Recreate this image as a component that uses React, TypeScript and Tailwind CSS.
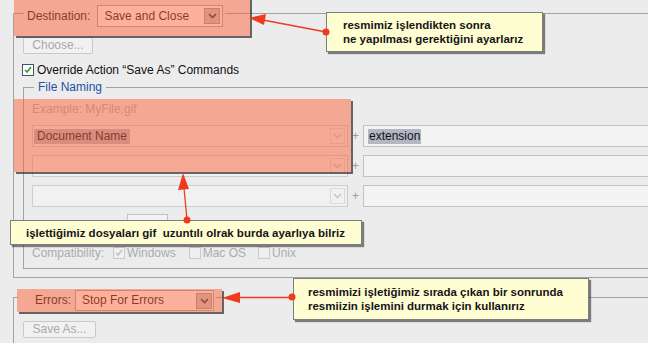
import React from "react";

const Chevron = ({ faded }: { faded?: boolean }) => (
  <svg width="9" height="6" viewBox="0 0 9 6">
    <path d="M1 1l3.5 3.5L8 1" fill="none" stroke={faded ? "#c8c8c8" : "#333"} strokeWidth="1.7" />
  </svg>
);

const Check = ({ disabled }: { disabled?: boolean }) => (
  <div
    className={`flex h-[12px] w-[12px] shrink-0 items-center justify-center border ${
      disabled ? "border-[#c9c9c9] bg-[#f0f0f0]" : "border-[#3d5670] bg-white"
    }`}
  >
    <svg width="8" height="8" viewBox="0 0 8 8">
      <path d="M1 4l2 2 4-5" fill="none" stroke={disabled ? "#c2c2c2" : "#2f9a2f"} strokeWidth="1.6" />
    </svg>
  </div>
);

const Box = ({ disabled }: { disabled?: boolean }) => (
  <div className={`h-[12px] w-[12px] shrink-0 border ${disabled ? "border-[#cbcbcb] bg-[#efefef]" : "border-[#3d5670] bg-white"}`} />
);

function NameRow({ sel, ext }: { sel?: string; ext?: string }) {
  return (
    <div className="flex h-[22px] items-center">
      <div className="flex h-[22px] w-[316px] shrink-0 items-center border border-[#cdcdcd] bg-[#f1f1f1] pl-[1px] pr-[2px]">
        {sel && <span className="bg-[#b3b7c5] px-[3px] leading-[15px] text-[#111]">{sel}</span>}
        <div className="ml-auto flex h-[16px] w-[15px] items-center justify-center border border-[#dadada]">
          <Chevron faded />
        </div>
      </div>
      <span className="w-[15px] shrink-0 text-center text-[#9c9c9c]">+</span>
      <div className="flex h-[22px] w-[320px] shrink-0 items-center border border-[#c3c3c3] bg-[#f3f3f3] pl-[4px]">
        {ext && <span className="bg-[#b3b7c5] px-[1px] leading-[15px] text-[#111]">{ext}</span>}
      </div>
    </div>
  );
}

function DropButton() {
  return (
    <div className="flex h-[16px] w-[16px] items-center justify-center border border-[#9a9a9a] bg-[#c6c6c6]">
      <Chevron />
    </div>
  );
}

export default function App() {
  return (
    <div className="relative h-[343px] w-[648px] overflow-hidden bg-[#ececec] font-['Liberation_Sans',Arial,sans-serif] text-[12px] leading-[15px] text-[#111]">
      {/* Destination group */}
      <div className="ml-[13px] mt-[13px] h-[265px] w-[700px] border-b border-l border-t border-[#a2a2a2]">
        <div className="-mt-[9px] ml-[10px] flex w-max items-center gap-[7px] bg-[#ececec] pl-[3px] pr-[2px]">
          <span>Destination:</span>
          <div className="flex h-[22px] w-[126px] items-center border border-[#a8a8a8] bg-white pl-[6px] pr-[2px]">
            <span>Save and Close</span>
            <div className="ml-auto">
              <DropButton />
            </div>
          </div>
        </div>

        <div className="ml-[9px] mt-[10px] flex h-[17px] w-[70px] items-center justify-center rounded-[2px] border border-[#c9c9c9] bg-[#f1f1f1] text-[#a9a9a9]">
          Choose...
        </div>

        <div className="ml-[8px] mt-[9px] flex h-[14px] items-center gap-[3px]">
          <Check />
          <span>Override Action “Save As” Commands</span>
        </div>

        {/* File Naming group */}
        <div className="ml-[9px] mt-[10px] h-[182px] w-[700px] border-b border-l border-t border-[#a2a2a2]">
          <div className="-mt-[8px] ml-[10px] w-max bg-[#ececec] px-[4px] text-[#1f50a8]">File Naming</div>
          <div className="ml-[8px] mt-[7px] text-[#b0b0b0]">Example: MyFile.gif</div>
          <div className="ml-[8px] mt-[8px] flex flex-col gap-[8px]">
            <NameRow sel="Document Name" ext="extension" />
            <NameRow />
            <NameRow />
          </div>
          {/* serial row, mostly hidden under the note */}
          <div className="ml-[8px] mt-[7px] flex h-[20px] items-center">
            <div className="w-[95px] shrink-0" />
            <div className="h-[20px] w-[41px] border border-[#c3c3c3] bg-[#f3f3f3]" />
          </div>
          <div className="ml-[8px] mt-[12px] flex h-[14px] items-center text-[#ababab]">
            <span className="w-[81px] shrink-0">Compatibility:</span>
            <div className="flex items-center gap-[2px]">
              <Check disabled />
              <span>Windows</span>
            </div>
            <div className="ml-[13px] flex items-center gap-[2px]">
              <Box disabled />
              <span>Mac OS</span>
            </div>
            <div className="ml-[12px] flex items-center gap-[2px]">
              <Box disabled />
              <span>Unix</span>
            </div>
          </div>
        </div>
      </div>

      {/* Errors group */}
      <div className="ml-[13px] mt-[19px] h-[60px] w-[700px] border-l border-t border-[#a2a2a2]">
        <div className="-mt-[8px] ml-[4px] flex w-max items-center gap-[4px] bg-[#ececec] pl-[17px] pr-[2px]">
          <span>Errors:</span>
          <div className="flex h-[21px] w-[139px] items-center border border-[#a8a8a8] bg-white pl-[6px] pr-[1px]">
            <span>Stop For Errors</span>
            <div className="ml-auto">
              <DropButton />
            </div>
          </div>
        </div>
        <div className="ml-[9px] mt-[10px] flex h-[17px] w-[73px] items-center justify-center rounded-[2px] border border-[#c9c9c9] bg-[#f1f1f1] text-[#a9a9a9]">
          Save As...
        </div>
      </div>

      {/* highlight overlays */}
      <div className="absolute left-[14px] top-[-2px] h-[38px] w-[236px] bg-[rgba(252,100,58,0.5)] shadow-[2px_2px_0_rgba(55,55,55,0.75)]" />
      <div className="absolute left-[14px] top-[99px] h-[73px] w-[337px] bg-[rgba(252,100,58,0.5)] shadow-[2px_2px_0_rgba(55,55,55,0.75)]" />
      <div className="absolute left-[17px] top-[289px] h-[23px] w-[205px] bg-[rgba(252,100,58,0.5)] shadow-[2px_2px_0_rgba(55,55,55,0.75)]" />

      {/* callouts */}
      <div className="absolute left-[326px] top-[12px] h-[40px] w-[217px] border border-[#7d7d7d] bg-[#fffed3] pl-[16px] pt-[5px] text-[11.5px] font-bold leading-[14px] text-[#151515] shadow-[2px_2px_1px_rgba(50,50,50,0.6)]">
        <div>resmimiz işlendikten sonra</div>
        <div>ne yapılması gerektiğini ayarlarız</div>
      </div>
      <div className="absolute left-[10px] top-[220px] flex h-[25px] w-[352px] items-center border border-[#7d7d7d] bg-[#fffed3] pl-[15px] text-[11.5px] font-bold leading-[14px] text-[#151515] shadow-[2px_2px_1px_rgba(50,50,50,0.6)]">
        işlettiğimiz dosyaları gif&nbsp; uzuntılı olrak burda ayarlıya bilriz
      </div>
      <div className="absolute left-[293px] top-[278px] h-[42px] w-[296px] border border-[#7d7d7d] bg-[#fffed3] pl-[14px] pt-[6px] text-[11.5px] font-bold leading-[14px] text-[#151515] shadow-[2px_2px_1px_rgba(50,50,50,0.6)]">
        <div>resmimizi işletiğimiz sırada çıkan bir sonrunda</div>
        <div>resmiizin işlemini durmak için kullanırız</div>
      </div>

      {/* arrows */}
      <svg className="pointer-events-none absolute left-0 top-0" width="648" height="343" viewBox="0 0 648 343">
        <g fill="#ee3b1f" stroke="#ee3b1f">
          <line x1="263" y1="20" x2="326" y2="32" strokeWidth="1.3" />
          <polygon points="249,18 266,14 264,25" stroke="none" />
          <circle cx="326" cy="32" r="3.5" stroke="none" />

          <line x1="184" y1="188" x2="187" y2="220" strokeWidth="1.3" />
          <polygon points="183,173 178,190 189,189" stroke="none" />
          <circle cx="187" cy="220" r="3.5" stroke="none" />

          <line x1="238" y1="297.5" x2="292" y2="297.5" strokeWidth="1.3" />
          <polygon points="222,298 240,292 240,303" stroke="none" />
          <circle cx="292" cy="297" r="3.5" stroke="none" />
        </g>
      </svg>
    </div>
  );
}
